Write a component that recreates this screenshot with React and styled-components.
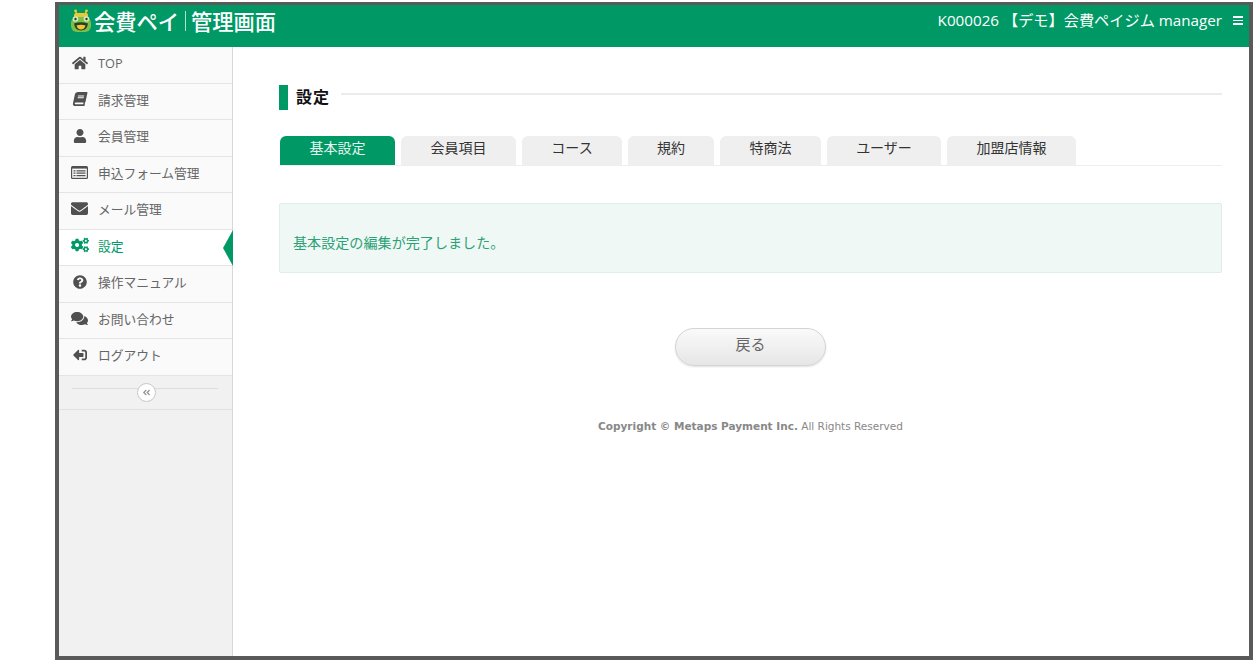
import React from 'react';
import styled, { createGlobalStyle } from 'styled-components';
import {
  FaHome, FaBook, FaUser, FaEnvelope, FaCogs,
  FaQuestionCircle, FaComments, FaSignOutAlt, FaAngleDoubleLeft,
} from 'react-icons/fa';

const GREEN = '#009966';

const GlobalStyle = createGlobalStyle`
  html, body {
    margin: 0;
    padding: 0;
    background: #fff;
    overflow: hidden;
  }
  body {
    font-family: "Open Sans", "Noto Sans CJK JP", sans-serif;
  }
`;

function ListIcon() {
  return (
    <svg width="17" height="13" viewBox="0 0 17 13">
      <rect x="0" y="0" width="17" height="13" rx="1.5" fill="currentColor" />
      <rect x="1.2" y="2.6" width="14.6" height="9.2" fill="#fafafa" />
      <path d="M2.5 4.2h2v1.2h-2zM2.5 6.6h2v1.2h-2zM2.5 9h2v1.2h-2zM5.5 4.2h9v1.2h-9zM5.5 6.6h9v1.2h-9zM5.5 9h9v1.2h-9z" fill="currentColor" />
    </svg>
  );
}

const menu = [
  { label: 'TOP', icon: <FaHome size={16} /> },
  { label: '請求管理', icon: <FaBook size={14} style={{ transform: 'skewX(-12deg)' }} /> },
  { label: '会員管理', icon: <FaUser size={14} /> },
  { label: '申込フォーム管理', icon: <ListIcon /> },
  { label: 'メール管理', icon: <FaEnvelope size={17} /> },
  { label: '設定', icon: <FaCogs size={18} />, active: true },
  { label: '操作マニュアル', icon: <FaQuestionCircle size={14} /> },
  { label: 'お問い合わせ', icon: <FaComments size={17} /> },
  { label: 'ログアウト', icon: <FaSignOutAlt size={14} style={{ transform: 'scaleX(-1)' }} /> },
];

const tabs = [
  { label: '基本設定', width: 115, active: true },
  { label: '会員項目', width: 115 },
  { label: 'コース', width: 100 },
  { label: '規約', width: 86 },
  { label: '特商法', width: 101 },
  { label: 'ユーザー', width: 114 },
  { label: '加盟店情報', width: 129 },
];

function FrogLogo() {
  return (
    <svg width="22" height="24" viewBox="0 0 22 24">
      <path d="M7 6 L5.5 1.5 M15 6 L16.5 1.5" stroke="#e8c93a" strokeWidth="1.6" fill="none" />
      <circle cx="5.5" cy="1.8" r="1.4" fill="#e8c93a" />
      <circle cx="16.5" cy="1.8" r="1.4" fill="#e8c93a" />
      <rect x="4" y="4" width="14" height="5" rx="2" fill="#e8c93a" />
      <rect x="1" y="8" width="20" height="15" rx="6" fill="#7cc04b" />
      <circle cx="5.5" cy="10" r="2.8" fill="#d8ecc0" />
      <circle cx="16.5" cy="10" r="2.8" fill="#d8ecc0" />
      <circle cx="5.5" cy="10" r="1.2" fill="#26402a" />
      <circle cx="16.5" cy="10" r="1.2" fill="#26402a" />
      <path d="M4 14.5 Q11 12 18 14.5 Q17 21.5 11 21.5 Q5 21.5 4 14.5 Z" fill="#26402a" />
      <path d="M6.5 16.5 Q11 15 15.5 16.5 Q14.5 20.5 11 20.5 Q7.5 20.5 6.5 16.5 Z" fill="#f1c62f" />
    </svg>
  );
}

export default function App() {
  return (
    <>
      <GlobalStyle />
      <Page>
        <Frame>
          <Header>
            <Logo>
              <FrogLogo />
              <LogoText>会費ペイ</LogoText>
              <LogoDivider />
              <LogoText>管理画面</LogoText>
            </Logo>
            <Account>
              <span>K000026 【デモ】会費ペイジム manager</span>
              <Burger><i /><i /><i /></Burger>
            </Account>
          </Header>
          <Body>
            <Sidebar>
              {menu.map((item) => (
                <MenuItem key={item.label} $active={item.active}>
                  <MenuIcon $active={item.active}>{item.icon}</MenuIcon>
                  <span>{item.label}</span>
                </MenuItem>
              ))}
              <Collapse>
                <CollapseButton><FaAngleDoubleLeft size={9} /></CollapseButton>
              </Collapse>
            </Sidebar>
            <Main>
              <TitleRow>
                <TitleBar />
                <Title>設定</Title>
                <TitleLine />
              </TitleRow>
              <Tabs>
                {tabs.map((tab) => (
                  <Tab key={tab.label} $width={tab.width} $active={tab.active}>{tab.label}</Tab>
                ))}
              </Tabs>
              <Alert>基本設定の編集が完了しました。</Alert>
              <BackButton type="button">戻る</BackButton>
              <Copyright><b>Copyright © Metaps Payment Inc.</b> All Rights Reserved</Copyright>
            </Main>
          </Body>
        </Frame>
      </Page>
    </>
  );
}

const Page = styled.div`
  box-sizing: border-box;
  width: 1254px;
  height: 661px;
  padding: 2px 1px 0 55px;
`;

const Frame = styled.div`
  box-sizing: border-box;
  width: 100%;
  height: 658px;
  border: 4px solid #5a5a5a;
  border-top-width: 3px;
  display: flex;
  flex-direction: column;
  overflow: hidden;
`;

const Header = styled.header`
  flex: 0 0 42px;
  background: ${GREEN};
  display: flex;
  justify-content: space-between;
  color: #fff;
`;

const Logo = styled.div`
  display: flex;
  align-items: center;
  height: 32px;
  padding-left: 11px;
  gap: 2px;
`;

const LogoText = styled.span`
  font-family: "Noto Sans CJK JP", sans-serif;
  font-size: 21.25px;
  font-weight: 500;
  line-height: 32px;
  color: #fff;
`;

const LogoDivider = styled.span`
  width: 1px;
  height: 20px;
  margin: 0 3px 0 4px;
  background: rgba(255, 255, 255, 0.7);
`;

const Account = styled.div`
  display: flex;
  align-items: flex-start;
  gap: 11px;
  padding: 5px 6px 0 0;
  font-size: 15.2px;
  line-height: 21px;
  white-space: nowrap;
`;

const Burger = styled.div`
  display: flex;
  flex-direction: column;
  gap: 2px;
  width: 10px;
  padding-top: 6px;

  i {
    display: block;
    height: 1.5px;
    background: #fff;
  }
`;

const Body = styled.div`
  flex: 1;
  display: flex;
  min-height: 0;
`;

const Sidebar = styled.nav`
  box-sizing: border-box;
  flex: 0 0 174px;
  background: #f1f1f1;
  border-right: 1px solid #d8d8d8;
`;

const MenuItem = styled.div`
  position: relative;
  box-sizing: border-box;
  height: 36.5px;
  display: flex;
  align-items: center;
  padding-bottom: 4px;
  background: ${(p) => (p.$active ? '#fff' : '#fafafa')};
  border-bottom: 1px solid #e4e4e4;
  color: ${(p) => (p.$active ? GREEN : '#666')};
  font-size: 12.75px;

  ${(p) => p.$active && `
    &::after {
      content: '';
      position: absolute;
      right: -1px;
      top: 0;
      border-style: solid;
      border-width: 18px 10px 18px 0;
      border-color: transparent ${GREEN} transparent transparent;
    }
  `}
`;

const MenuIcon = styled.span`
  box-sizing: border-box;
  width: 39px;
  flex: none;
  display: flex;
  justify-content: center;
  padding-left: 2px;
  color: ${(p) => (p.$active ? GREEN : '#505050')};
`;

const Collapse = styled.div`
  position: relative;
  box-sizing: border-box;
  height: 34px;
  border-bottom: 1px solid #e0e0e0;
  display: flex;
  justify-content: center;
  padding-top: 7px;

  &::before {
    content: '';
    position: absolute;
    left: 13px;
    right: 14px;
    top: 12px;
    height: 1px;
    background: #ddd;
  }
`;

const CollapseButton = styled.span`
  position: relative;
  box-sizing: border-box;
  width: 19px;
  height: 19px;
  margin-left: 1px;
  border-radius: 50%;
  border: 1px solid #c8c8c8;
  background: #fff;
  color: #999;
  display: flex;
  align-items: center;
  justify-content: center;
`;

const Main = styled.main`
  box-sizing: border-box;
  flex: 1;
  min-width: 0;
  background: #fff;
  padding: 38px 27px 0 46px;
  display: flex;
  flex-direction: column;
`;

const TitleRow = styled.div`
  display: flex;
  align-items: flex-start;
  height: 25px;
`;

const TitleBar = styled.span`
  width: 9px;
  height: 25px;
  background: ${GREEN};
`;

const Title = styled.h1`
  margin: 0 11px 0 8px;
  font-size: 16px;
  font-weight: 700;
  line-height: 24px;
  color: #111;
  letter-spacing: 1px;
`;

const TitleLine = styled.span`
  flex: 1;
  height: 2px;
  margin-top: 8px;
  background: #ececec;
`;

const Tabs = styled.div`
  display: flex;
  gap: 6px;
  margin-top: 26px;
  padding-left: 1px;
  border-bottom: 1px solid #eee;
`;

const Tab = styled.div`
  box-sizing: border-box;
  width: ${(p) => p.$width}px;
  height: 29px;
  border-radius: 6px 6px 0 0;
  background: ${(p) => (p.$active ? GREEN : '#efefef')};
  color: ${(p) => (p.$active ? '#e8f6f0' : '#333')};
  font-size: 14px;
  line-height: 24px;
  text-align: center;
`;

const Alert = styled.div`
  box-sizing: border-box;
  height: 70px;
  margin-top: 37px;
  padding: 29px 13px 0;
  background: #f0f8f5;
  border: 1px solid #dcefe8;
  border-radius: 2px;
  color: #2ba176;
  font-size: 14.1px;
  line-height: 20px;
`;

const BackButton = styled.button`
  box-sizing: border-box;
  align-self: center;
  width: 151px;
  height: 38px;
  margin-top: 55px;
  border: 1px solid #d4d4d4;
  border-radius: 19px;
  background: linear-gradient(#fafafa, #e6e6e6);
  box-shadow: 0 1px 2px rgba(0, 0, 0, 0.12);
  color: #666;
  font-family: inherit;
  font-size: 15px;
  padding: 0 0 7px;
`;

const Copyright = styled.p`
  margin: 51px 0 0;
  text-align: center;
  font-family: "DejaVu Sans", sans-serif;
  font-size: 10.5px;
  line-height: 18px;
  color: #888;
`;
